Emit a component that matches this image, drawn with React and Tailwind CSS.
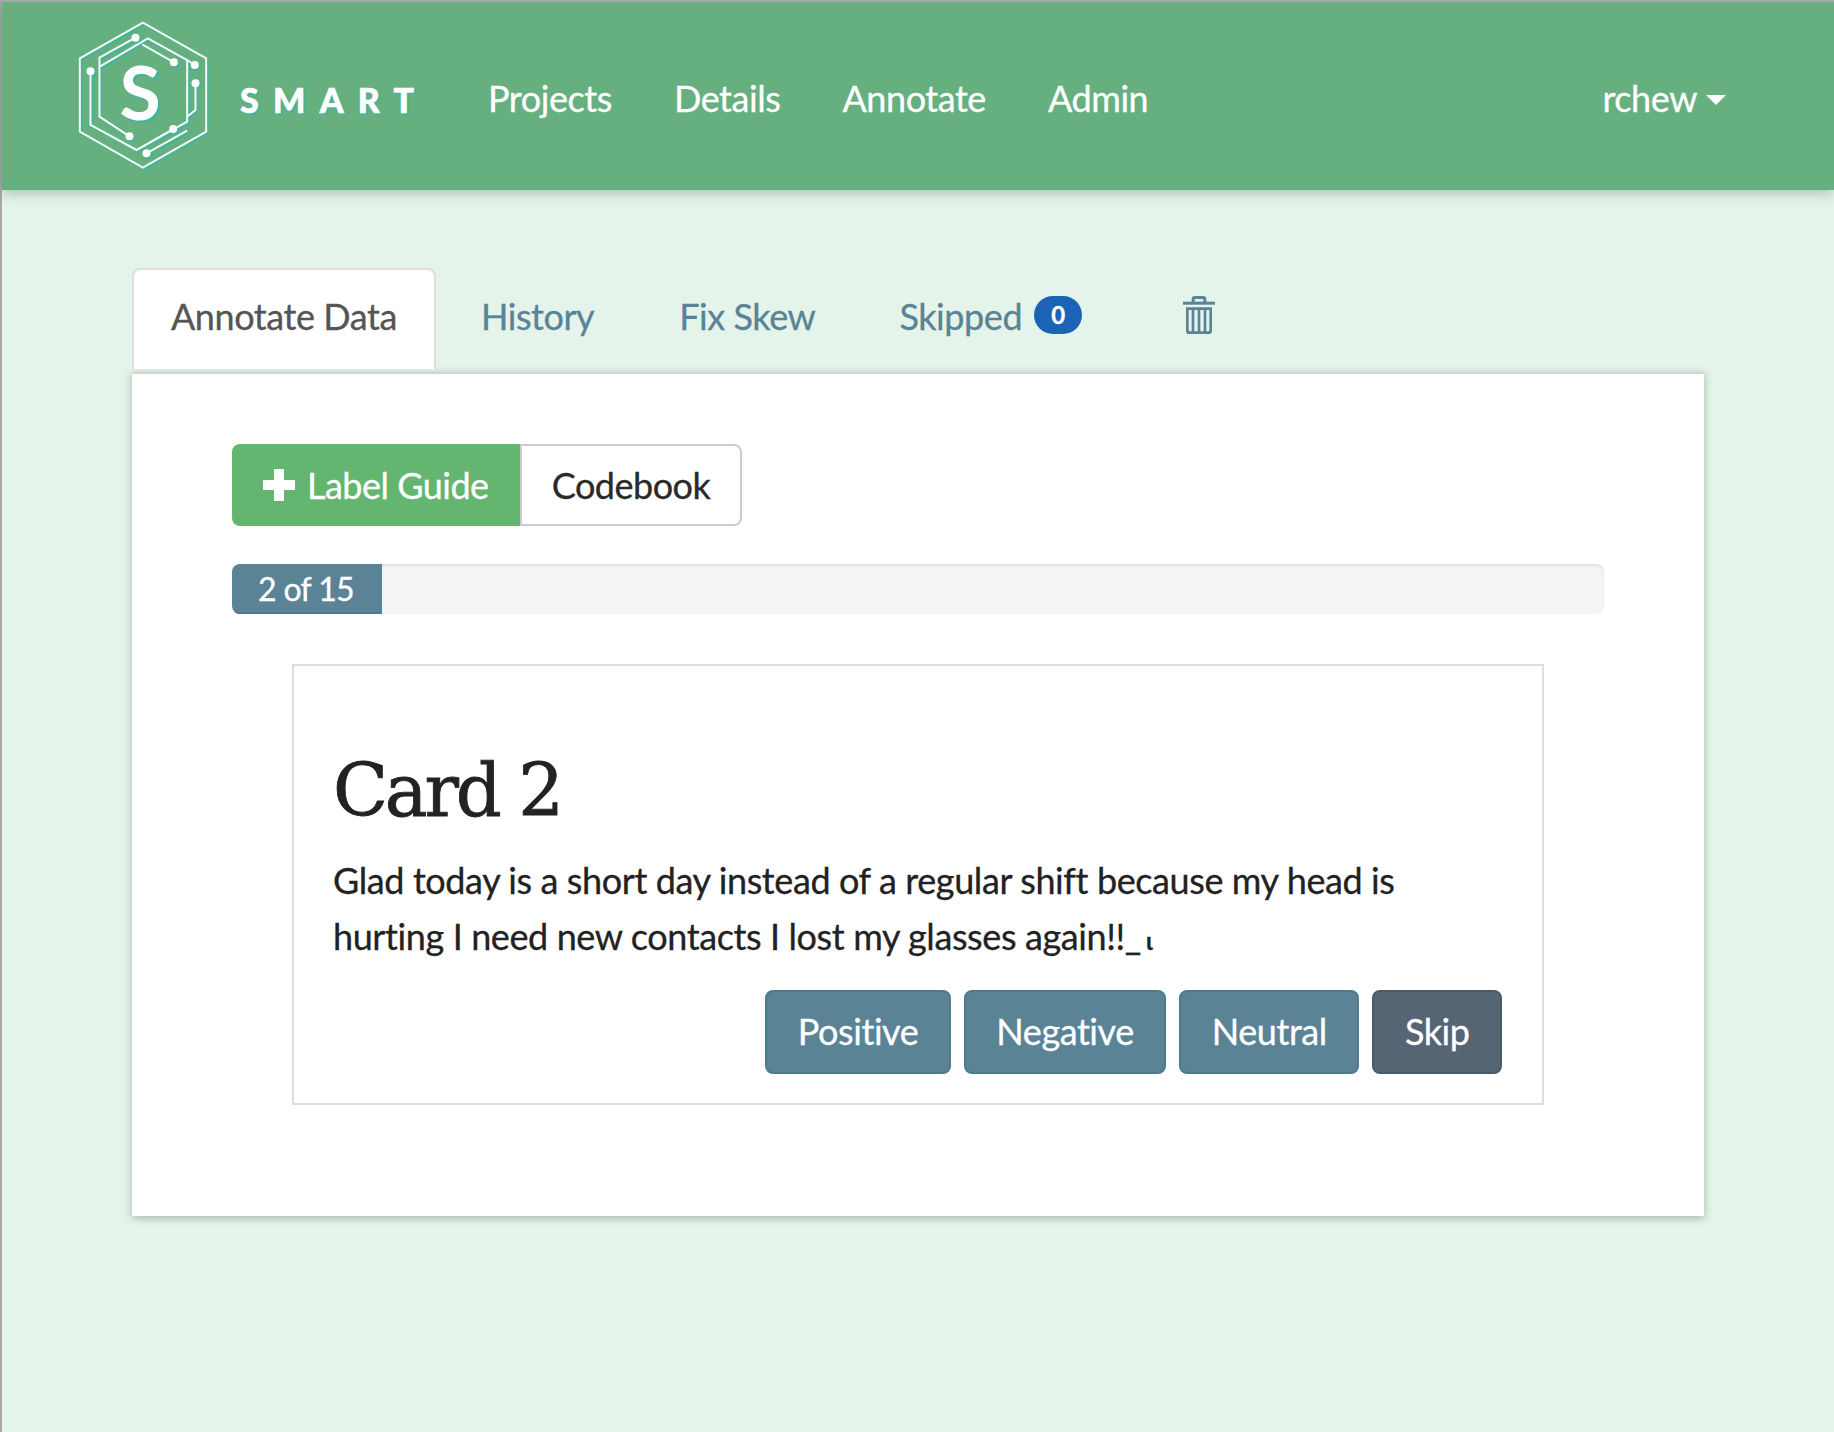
import React from 'react';

function Logo() {
  const lines = (
    <>
      <path d="M247 38 L437 145 L437 365 L247 473 L58 365 L58 145 Z" />
      <path d="M225 83 L117 143 L117 320 L207 379" />
      <path d="M90 184 L90 345 L228 420 L380 335 L380 150 L262 85 L118 170" />
      <path d="M245 103 L340 157" />
      <path d="M380 150 L403 165" />
      <path d="M405 220 L405 300 L380 320" />
      <path d="M338 357 L228 420" />
      <path d="M258 430 L380 362" />
    </>
  );
  const dots = [[225, 83], [340, 157], [403, 165], [405, 220], [90, 184], [207, 379], [338, 357], [258, 430]];
  return (
    <svg width="132" height="150" viewBox="50 30 395 450" className="shrink-0 -mt-[2px]">
      <g fill="none" stroke="#3fb59f" strokeWidth="6" transform="translate(5 5)">{lines}</g>
      <g fill="#3fb59f" transform="translate(5 5)">
        {dots.map(([x, y]) => <circle key={x + '-' + y} cx={x} cy={y} r="12" />)}
      </g>
      <g fill="none" stroke="#f2faf6" strokeWidth="6">{lines}</g>
      <g fill="#ffffff">
        {dots.map(([x, y]) => <circle key={x + '-' + y} cx={x} cy={y} r="12" />)}
      </g>
      <text x="239" y="329" textAnchor="middle" fontSize="226" fontWeight="700" fontFamily="Lato, sans-serif" fill="#3fb59f" dx="6" dy="6">S</text>
      <text x="239" y="329" textAnchor="middle" fontSize="226" fontWeight="700" fontFamily="Lato, sans-serif" fill="#ffffff">S</text>
    </svg>
  );
}

function TrashIcon() {
  return (
    <svg width="32" height="38" viewBox="69 48 96 114" fill="#5a8396">
      <rect x="69" y="65" width="96" height="9" />
      <path d="M95 66 V58 Q95 48 105 48 H129 Q139 48 139 58 V66 H130 V57 H104 V66 Z" />
      <path d="M78 82 H156 V152 Q156 162 146 162 H88 Q78 162 78 152 Z M86 90 V150 Q86 154 90 154 H95 V90 Z M103 90 V154 H113 V90 Z M121 90 V154 H131 V90 Z M139 90 V154 H144 Q148 154 148 150 V90 Z" fillRule="evenodd" />
    </svg>
  );
}

function NavBar() {
  return (
    <header className="h-[190px] border-t-2 border-[#a9a9a9] bg-[#66af7f] flex items-center pl-[75px] pr-[108px] text-white text-[36px] tracking-[-0.012em] shadow-[0_3px_12px_rgba(60,90,70,0.35)]">
      <Logo />
      <span className="ml-[31px] mt-[6px] w-[207px] font-black text-[34px] tracking-[0.42em] whitespace-nowrap [-webkit-text-stroke:0.6px] [text-shadow:2px_2px_0_#3fb59f]">SMART</span>
      <nav className="ml-[41px] mt-[3px] flex gap-[62px]">
        <a>Projects</a>
        <a>Details</a>
        <a>Annotate</a>
        <a>Admin</a>
      </nav>
      <div className="ml-auto mt-[3px] flex items-center gap-[9px]">
        <span>rchew</span>
        <span className="mt-[4px] w-0 h-0 border-x-[10px] border-x-transparent border-t-[10px] border-t-white"></span>
      </div>
    </header>
  );
}

function Tabs() {
  return (
    <ul className="flex items-start h-[104px] text-[36px] tracking-[-0.012em] text-[#5a8396]">
      <li className="h-[101px] px-[37px] pt-[19px] bg-white border-2 border-b-0 border-[#dedede] rounded-t-[8px] text-[#555555]">Annotate Data</li>
      <li className="ml-[5px] px-[40px] pt-[21px]">History</li>
      <li className="ml-[5px] px-[40px] pt-[21px]">Fix Skew</li>
      <li className="ml-[4px] pl-[40px] pt-[21px] flex items-start">
        Skipped
        <span className="ml-[12px] mt-[7px] w-[48px] h-[38px] rounded-[19px] bg-[#1b63b5] text-white text-[24px] font-bold tracking-normal flex items-center justify-center">0</span>
      </li>
      <li className="ml-[101px] pt-[28px]"><TrashIcon /></li>
    </ul>
  );
}

function ActionButton({ children, dark }) {
  return (
    <button className={dark
      ? 'h-[84px] px-[30.5px] pb-[3px] rounded-[8px] border-2 border-[#4b5a68] bg-[#566573] text-white text-[36px] tracking-[-0.012em]'
      : 'h-[84px] px-[30.5px] pb-[3px] rounded-[8px] border-2 border-[#4f7a8e] bg-[#5a8396] text-white text-[36px] tracking-[-0.012em]'}>
      {children}
    </button>
  );
}

export default function App() {
  return (
    <div className="min-h-screen bg-[#e4f4ea] border-l-2 border-[#a9a9a9] font-['Lato',sans-serif] [-webkit-text-stroke:0.3px]">
      <NavBar />
      <main className="pt-[78px] px-[130px]">
        <Tabs />
        <section className="h-[844px] bg-white border-t-2 border-[#d4d4d4] shadow-[0_2px_8px_rgba(60,90,70,0.4)] pt-[70px] px-[100px]">
          <div className="flex h-[82px] text-[36px] tracking-[-0.014em]">
            <button className="w-[288px] rounded-l-[8px] bg-[#63b56f] text-white flex items-center pl-[31px] gap-[12px]">
              <svg width="32" height="32" viewBox="0 0 32 32" fill="#ffffff"><path d="M11 0 H21 V11 H32 V21 H21 V32 H11 V21 H0 V11 H11 Z" /></svg>
              Label Guide
            </button>
            <button className="w-[222px] rounded-r-[8px] bg-white border-2 border-l-2 border-[#cccccc] text-[#2a2a2a]">Codebook</button>
          </div>
          <div className="mt-[38px] h-[50px] rounded-[8px] bg-[#f4f4f4] shadow-[inset_0_2px_2px_rgba(0,0,0,0.08)] overflow-hidden">
            <div className="w-[150px] h-full pt-[1px] pr-[2px] bg-[#5a8396] border-b-2 border-[#4f7a8e] text-white text-[32px] tracking-[-0.02em] flex items-center justify-center">2 of 15</div>
          </div>
          <article className="mt-[50px] mx-[60px] h-[441px] border-2 border-[#dddddd] pl-[39px] pr-[40px] pt-[83px] text-[#222222]">
            <h2 className="text-[72px] leading-[84px] font-['DejaVu_Serif',serif] tracking-[-0.045em] [-webkit-text-stroke:0.8px]">Card 2</h2>
            <p className="mt-[19px] text-[36px] leading-[56px] tracking-[-0.011em]">Glad today is a short day instead of a regular shift because my head is hurting I need new contacts I lost my glasses again!!_<span className="ml-[5px] text-[24px] font-bold">ɩ</span></p>
            <div className="mt-[21px] flex justify-end gap-[13px]">
              <ActionButton>Positive</ActionButton>
              <ActionButton>Negative</ActionButton>
              <ActionButton>Neutral</ActionButton>
              <ActionButton dark>Skip</ActionButton>
            </div>
          </article>
        </section>
      </main>
    </div>
  );
}
